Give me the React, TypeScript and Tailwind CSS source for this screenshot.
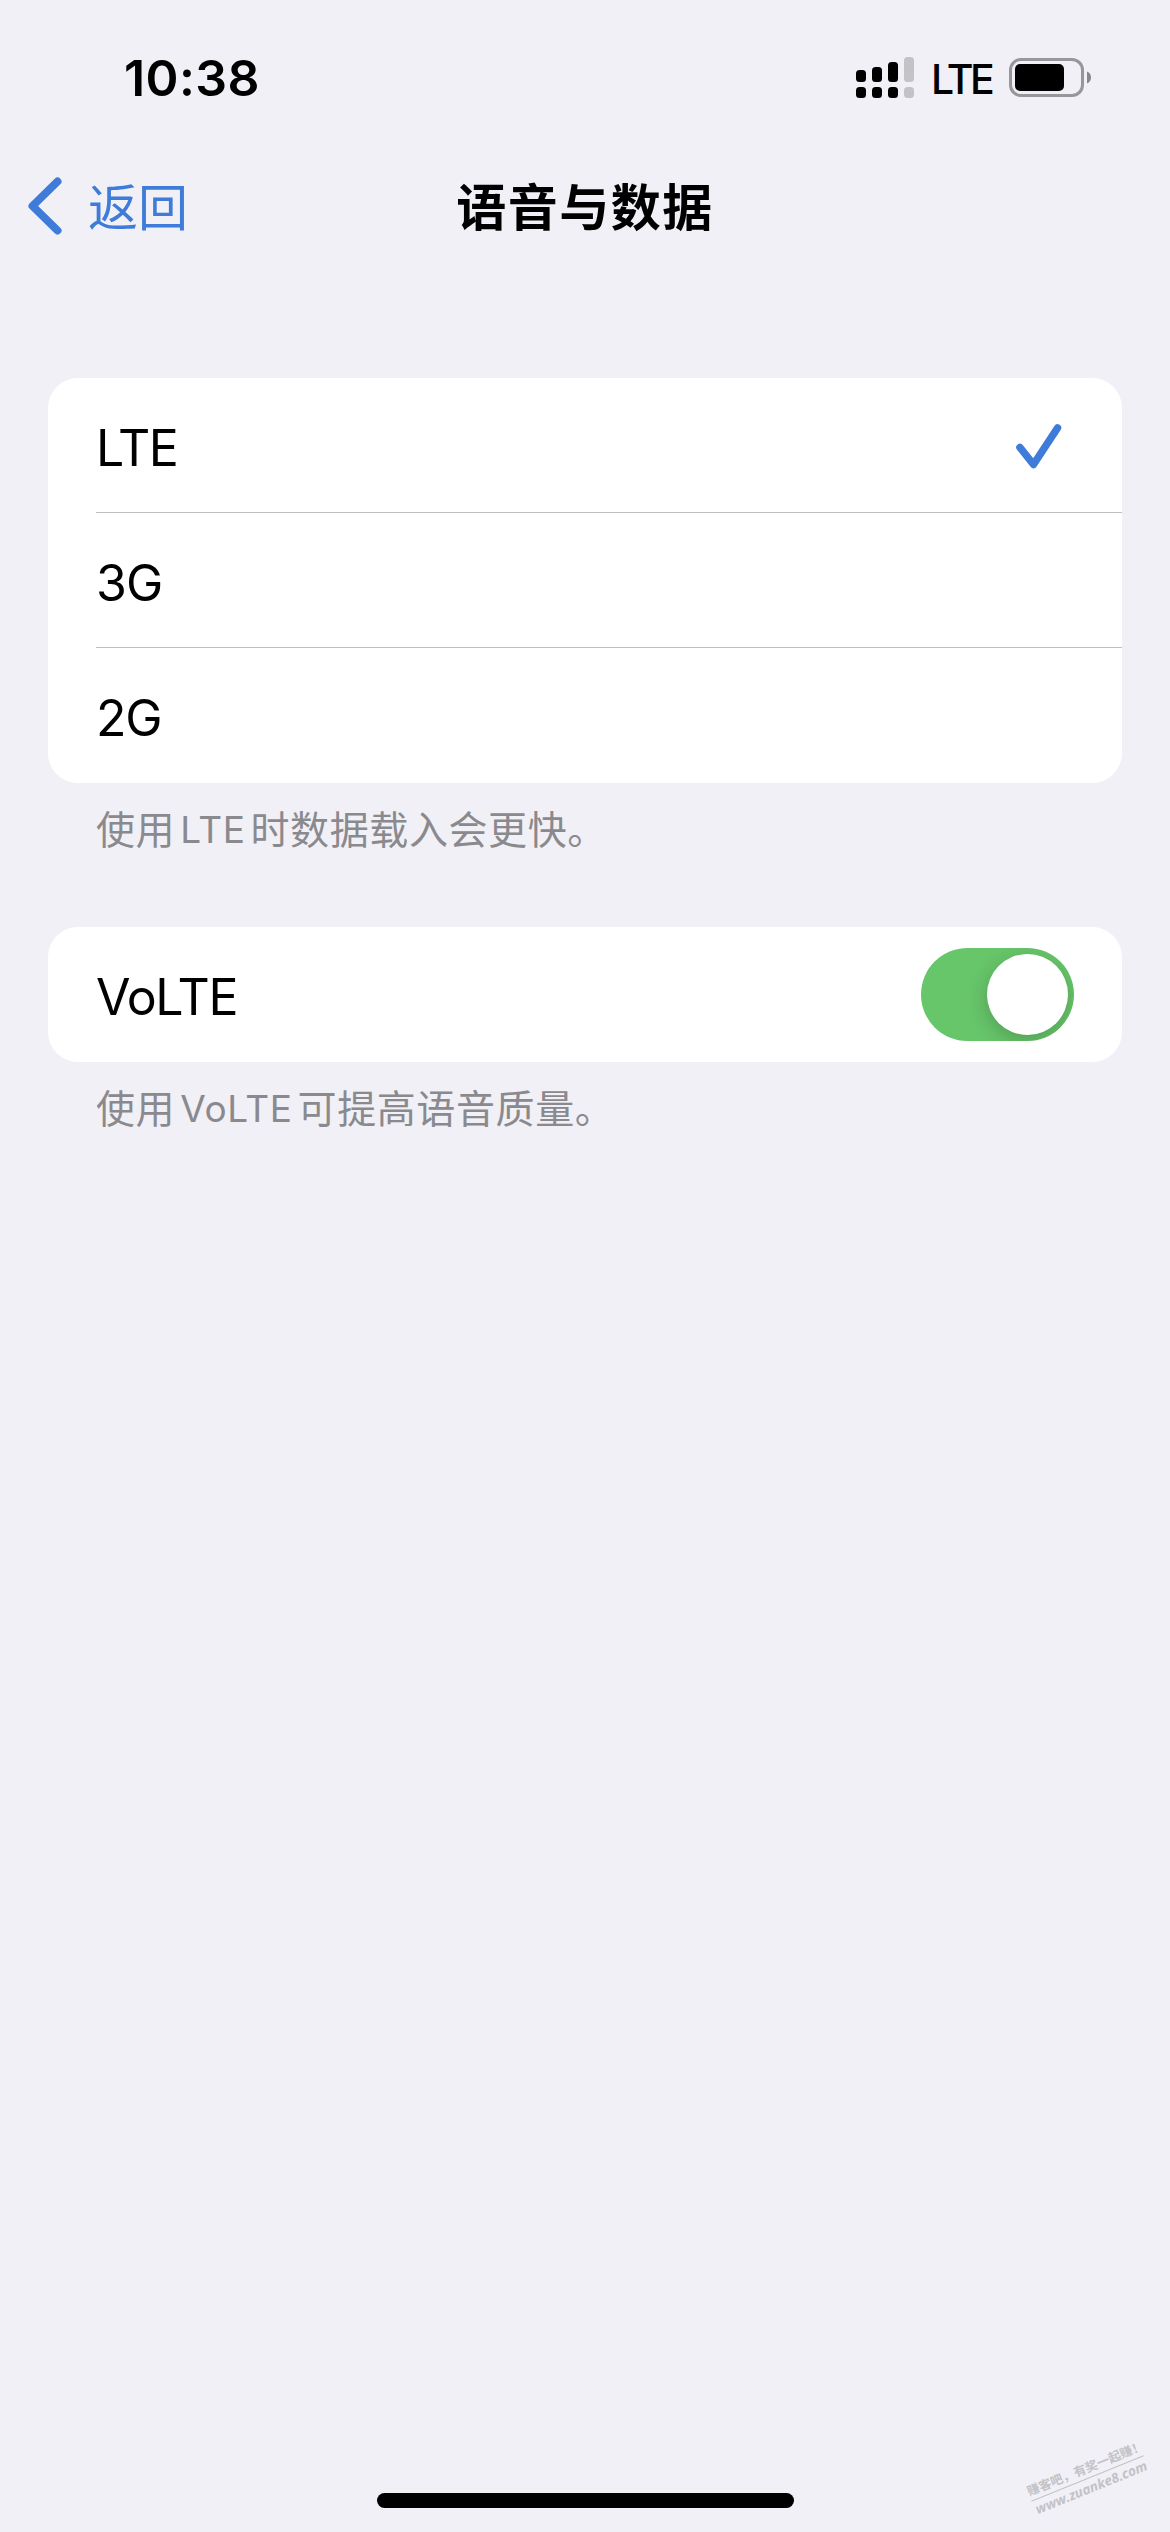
import type { ReactNode } from "react";

const networkModes = [
  { id: "lte", label: "LTE", tracking: "tracking-[-1.500px]" },
  { id: "3g", label: "3G", tracking: "tracking-[-1px]" },
  { id: "2g", label: "2G", tracking: "tracking-[-1.200px]" },
];

function SignalIcon() {
  return (
    <svg width="58" height="41" viewBox="0 0 58 41" aria-hidden>
      <rect x="0" y="13" width="10" height="12" rx="3.5" />
      <rect x="16" y="10" width="10" height="15" rx="3.5" />
      <rect x="32" y="5" width="10" height="20" rx="3.5" />
      <rect x="48" y="0" width="10" height="25" rx="3.5" fill="#c3c3c7" />
      <rect x="0" y="30" width="10" height="11" rx="3.5" />
      <rect x="16" y="30" width="10" height="11" rx="3.5" />
      <rect x="32" y="30" width="10" height="11" rx="3.5" />
      <rect x="48" y="30" width="10" height="11" rx="3.5" fill="#c3c3c7" />
    </svg>
  );
}

function BatteryIcon() {
  return (
    <svg width="82" height="39" viewBox="0 0 82 39" aria-hidden>
      <rect
        x="1.5"
        y="1.5"
        width="72"
        height="36"
        rx="10.5"
        fill="none"
        stroke="#97979b"
        strokeWidth="3"
      />
      <rect x="6" y="6" width="49" height="27" rx="5" />
      <path d="M78 13.5c2.600 1 4 3.300 4 6s-1.400 5-4 6z" fill="#88888c" />
    </svg>
  );
}

function StatusBar() {
  return (
    <header className="flex h-[154px] items-start justify-between pl-[124px] pr-[79px] pt-[57px]">
      <span className="text-[50px] font-semibold leading-[42px] tracking-[0.4px]">
        10:38
      </span>
      <div className="flex items-start">
        <SignalIcon />
        <span className="ml-[17px] mr-[18px] mt-[1px] w-[60px] text-[41px] font-medium leading-[42px] tracking-[-3.500px]">
          LTE
        </span>
        <div className="mt-[1px]">
          <BatteryIcon />
        </div>
      </div>
    </header>
  );
}

function NavBar() {
  return (
    <nav className="grid h-[104px] grid-cols-[1fr_auto_1fr] items-center px-[28px]">
      <a className="flex items-center gap-[26px] text-[#3f7bd8]">
        <svg width="34" height="58" viewBox="0 0 34 58" fill="none" aria-hidden>
          <path
            d="M29.500 4.500L4.500 29l25 24.500"
            stroke="currentColor"
            strokeWidth="8"
            strokeLinecap="round"
            strokeLinejoin="round"
          />
        </svg>
        <span className="pt-[3px] text-[50px] leading-[60px]">返回</span>
      </a>
      <h1 className="pt-[3px] text-[50px] font-bold leading-[60px] tracking-[1.500px]">
        语音与数据
      </h1>
    </nav>
  );
}

function Card({ children }: { children: ReactNode }) {
  return (
    <div className="overflow-hidden rounded-[30px] bg-white pl-[48px]">
      {children}
    </div>
  );
}

function Checkmark() {
  return (
    <svg
      className="mt-[4px]"
      width="46"
      height="46"
      viewBox="0 0 46 46"
      fill="none"
      aria-hidden
    >
      <path
        d="M4 23.500l13.500 17L41.500 4"
        stroke="#3f7bd8"
        strokeWidth="7.500"
        strokeLinecap="round"
        strokeLinejoin="round"
      />
    </svg>
  );
}

function Toggle() {
  return (
    <button
      type="button"
      role="switch"
      aria-checked
      aria-label="VoLTE"
      className="flex h-[93px] w-[153px] items-center justify-end overflow-hidden rounded-full bg-[#67c56a] pr-[6px]"
    >
      <span className="size-[81px] rounded-full bg-white shadow-[0_6px_20px_rgba(0,0,0,0.2)]" />
    </button>
  );
}

function Watermark() {
  return (
    <div className="absolute bottom-[34px] right-[22px] flex w-[121px] -rotate-[22deg] flex-col text-[#c2c2c6]">
      <p className="whitespace-nowrap border-b border-[#c2c2c6] text-[12.500px] font-bold leading-[19px]">
        赚客吧，有奖一起赚！
      </p>
      <p className="pl-px font-['Open_Sans'] text-[13.500px] font-bold italic leading-[19px]">
        www.zuanke8.com
      </p>
    </div>
  );
}

export default function App() {
  return (
    <div className="relative flex h-[2532px] w-[1170px] flex-col overflow-hidden bg-[#f1f0f6] font-['Inter','Noto_Sans_CJK_SC',sans-serif] text-black">
      <StatusBar />
      <NavBar />

      <main className="flex flex-1 flex-col px-[48px] pt-[120px]">
        <Card>
          {networkModes.map((mode, i) => (
            <div
              key={mode.id}
              className="flex h-[135px] items-center justify-between border-b border-[#bebec1] pr-[60px] last:border-transparent"
            >
              <span
                className={`pt-[6px] text-[50px] leading-[60px] ${mode.tracking}`}
              >
                {mode.label}
              </span>
              {i === 0 && <Checkmark />}
            </div>
          ))}
        </Card>
        <p className="flex h-[144px] items-start pl-[48px] pt-[22px] text-[39px] leading-[50px] tracking-[0.6px] text-[#8a8a8e]">
          <span>使用</span>
          <span className="ml-[5px] mr-[5px] text-[37px]">LTE</span>
          <span>时数据载入会更快。</span>
        </p>

        <Card>
          <div className="flex h-[135px] items-center justify-between pr-[48px]">
            <span className="pt-[5px] text-[50px] leading-[60px] tracking-[-1.300px]">
              VoLTE
            </span>
            <Toggle />
          </div>
        </Card>
        <p className="flex items-start pl-[48px] pt-[22px] text-[39px] leading-[50px] tracking-[0.6px] text-[#8a8a8e]">
          <span>使用</span>
          <span className="ml-[5px] mr-[5px] text-[37px]">VoLTE</span>
          <span>可提高语音质量。</span>
        </p>
      </main>

      <div className="mb-[24px] h-[15px] w-[417px] self-center rounded-full bg-black" />
      <Watermark />
    </div>
  );
}
